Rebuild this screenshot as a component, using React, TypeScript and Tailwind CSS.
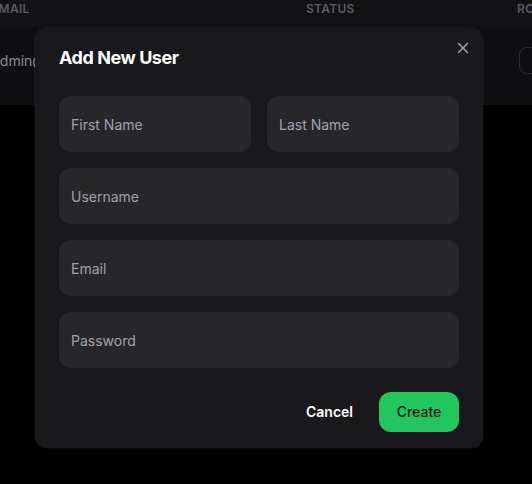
import React, { useState } from 'react'

const Field = ({ placeholder, type = 'text' }: { placeholder: string; type?: string }) => {
  const [value, setValue] = useState('')
  return (
    <input
      type={type}
      value={value}
      onChange={(e) => setValue(e.target.value)}
      placeholder={placeholder}
      className="h-14 w-full min-w-0 rounded-xl bg-[#27272a] px-3 text-sm text-white placeholder:text-[#a1a1aa] outline-none"
    />
  )
}

export default function App() {
  return (
    <div
      className="relative h-[484px] w-[532px] overflow-hidden bg-black"
      style={{ fontFamily: 'Inter, "Noto Sans", sans-serif' }}
    >
      {/* Users table behind the dialog (dimmed) */}
      <div className="ml-[-9px] flex w-[620px] flex-col">
        <div className="flex h-[27px] items-start bg-[#121214] pt-[1px] text-xs font-semibold uppercase tracking-wide text-[#5b5b62]">
          <div className="w-[315px] shrink-0">Email</div>
          <div className="w-[211px] shrink-0">Status</div>
          <div className="w-[80px] shrink-0">Role</div>
        </div>
        <div className="h-[78px] bg-[#0e0e10] pt-[20px]">
          <div className="flex h-[27px] items-center text-sm text-[#8a8a90]">
            <div className="w-[315px] shrink-0 pl-[1px]">admin@example.com</div>
            <div className="w-[213px] shrink-0">Active</div>
            <div className="h-[27px] w-[80px] shrink-0 rounded-lg border border-[#2a2a2e]" />
          </div>
        </div>
      </div>

      {/* Dialog */}
      <div className="absolute left-[35px] top-[28px] w-[448px] rounded-xl bg-[#19191b] px-6 py-4 ring-1 ring-white/[0.04]">
        <button className="absolute right-[11px] top-[11px] text-[#a1a1aa]">
          <svg width="18" height="18" viewBox="0 0 24 24" fill="none" stroke="currentColor" strokeWidth="2" strokeLinecap="round">
            <path d="M18 6 6 18" />
            <path d="m6 6 12 12" />
          </svg>
        </button>

        <h2 className="mb-6 text-lg font-bold leading-7 tracking-tight text-white">Add New User</h2>

        <div className="flex flex-col gap-4">
          <div className="flex gap-4">
            <Field placeholder="First Name" />
            <Field placeholder="Last Name" />
          </div>
          <Field placeholder="Username" />
          <Field placeholder="Email" type="email" />
          <Field placeholder="Password" type="password" />
        </div>

        <div className="mt-6 flex items-center justify-end gap-[10px]">
          <button className="h-10 px-4 text-sm font-semibold text-white">Cancel</button>
          <button className="h-10 w-20 rounded-xl bg-[#22c55e] text-sm font-medium text-[#18181b]">
            Create
          </button>
        </div>
      </div>
    </div>
  )
}
